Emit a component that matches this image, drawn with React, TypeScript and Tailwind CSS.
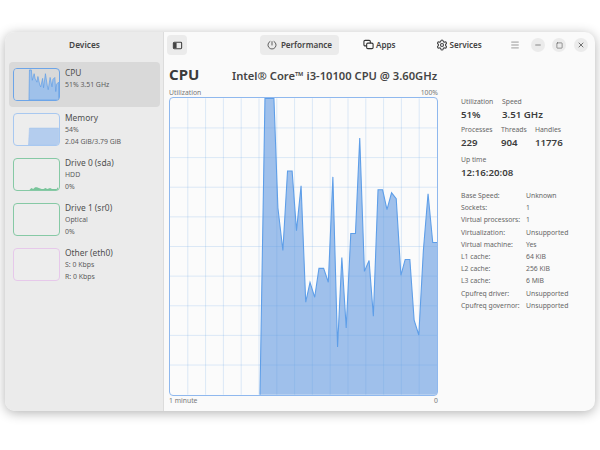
import { Menu, Minus, Settings, Square, X } from "lucide-react"

const chartPoints: [number, number][] = [
  [90.5, 298], [95.5, 0], [104.5, 0], [108.5, 110], [113.5, 153], [118.2, 73], [122.8, 73],
  [127.2, 133], [131.8, 88], [136.5, 205], [140.8, 185], [145.5, 200], [149.8, 171], [154.5, 171],
  [159.2, 185], [163.8, 79], [168.5, 250], [172.8, 160], [177.2, 231], [181.8, 136], [186.5, 136],
  [190.8, 40], [195.5, 174], [200.2, 163], [204.5, 219], [209.2, 92], [213.8, 92], [218.2, 112],
  [222.8, 95], [227.5, 101], [232.2, 178], [236.5, 162], [241.2, 162], [245.5, 223], [250.2, 238],
  [254.8, 153], [259.5, 96], [264.2, 145], [268.5, 145],
]

const linePath = chartPoints.map(([x, y]) => `${x},${y}`).join(" ")
const fillPath = `${linePath} 268.5,298`

const details = [
  ["Base Speed:", "Unknown"],
  ["Sockets:", "1"],
  ["Virtual processors:", "1"],
  ["Virtualization:", "Unsupported"],
  ["Virtual machine:", "Yes"],
  ["L1 cache:", "64 KiB"],
  ["L2 cache:", "256 KiB"],
  ["L3 cache:", "6 MiB"],
  ["Cpufreq driver:", "Unsupported"],
  ["Cpufreq governor:", "Unsupported"],
]

function CpuThumb() {
  return (
    <svg viewBox="0 0 47 33" className="h-full w-full">
      <rect x="0" y="0" width="15.5" height="33" fill="#dcdcdc" />
      <polygon
        points="15.5,33 16,1 18,1 19,12 21,5 22,10 24,14 25,8 27,17 28,19 30,10 31,20 33,5 35,18 36,22 38,9 40,19 41,11 43,9 44,24 45,16 47,14 47,33"
        fill="#9fc1ea"
        stroke="#5b9ce6"
        strokeWidth="0.7"
      />
    </svg>
  )
}

function MemoryThumb() {
  return (
    <svg viewBox="0 0 47 33" className="h-full w-full">
      <polygon points="15,33 16,15 47,15 47,33" fill="#b4cdee" stroke="#a4c5ef" strokeWidth="0.6" />
    </svg>
  )
}

function DriveThumb() {
  return (
    <svg viewBox="0 0 47 33" className="h-full w-full">
      <polygon
        points="16,33 18,31 20,32 22,30 24,30 26,31 29,32 31,32 33,31 35,32 38,31 40,32 43,32 45,32 46,30 47,33"
        fill="#78c49a"
      />
    </svg>
  )
}

const devices = [
  { name: "CPU", lines: ["51% 3.51 GHz"], border: "border-[#6da5e8]", bg: "bg-transparent", thumb: <CpuThumb />, active: true },
  { name: "Memory", lines: ["54%", "2.04 GiB/3.79 GiB"], border: "border-[#a8c8f0]", bg: "bg-[#ededed]", thumb: <MemoryThumb />, active: false },
  { name: "Drive 0 (sda)", lines: ["HDD", "0%"], border: "border-[#86c9a5]", bg: "bg-[#ededed]", thumb: <DriveThumb />, active: false },
  { name: "Drive 1 (sr0)", lines: ["Optical", "0%"], border: "border-[#86c9a5]", bg: "bg-[#ededed]", thumb: null, active: false },
  { name: "Other (eth0)", lines: ["S: 0 Kbps", "R: 0 Kbps"], border: "border-[#e6c8ea]", bg: "bg-[#ededed]", thumb: null, active: false },
]

function DeviceRow({ device }: { device: (typeof devices)[number] }) {
  return (
    <div
      className={`flex h-[45px] items-center gap-[5px] rounded-[4px] pl-[4px] ${
        device.active ? "bg-[#d9d9d9]" : ""
      }`}
    >
      <div
        className={`h-[33px] w-[47px] shrink-0 overflow-hidden rounded-[4px] border ${device.border} ${device.bg}`}
      >
        {device.thumb}
      </div>
      <div className="self-start pt-[5px] text-[#4f4f4f]">
        <p className="text-[8.4px] leading-[12px]">{device.name}</p>
        {device.lines.map((line) => (
          <p key={line} className="text-[6.9px] leading-[11.5px] text-[#5c5c5c]">
            {line}
          </p>
        ))}
      </div>
    </div>
  )
}

function Stat({ label, value, className }: { label: string; value: string; className: string }) {
  return (
    <div className={className}>
      <p className="text-[6.8px] leading-[11px] text-[#666666]">{label}</p>
      <p className="mt-[1px] text-[9.7px] font-semibold leading-[14px] text-[#3d3d3d]">{value}</p>
    </div>
  )
}

function UtilizationChart() {
  const verticals = Array.from({ length: 14 }, (_, i) => (i + 1) * 17.9)
  const horizontals = Array.from({ length: 9 }, (_, i) => (i + 1) * 29.8)

  return (
    <div className="h-[299px] w-[269px] overflow-hidden rounded-[4px] border border-[#8fb8ee] bg-[#fbfbfb]">
      <svg viewBox="0 0 268.5 298" className="block h-full w-full">
        <polygon points={fillPath} fill="#77a7e4" fillOpacity="0.7" />
        {verticals.map((x) => (
          <line key={x} x1={x} x2={x} y1="0" y2="298" stroke="#5e9ee8" strokeOpacity="0.2" strokeWidth="1" />
        ))}
        {horizontals.map((y) => (
          <line key={y} x1="0" x2="268.5" y1={y} y2={y} stroke="#5e9ee8" strokeOpacity="0.2" strokeWidth="1" />
        ))}
        <polyline points={linePath} fill="none" stroke="#5e9ee8" strokeWidth="1.1" />
      </svg>
    </div>
  )
}

export default function App() {
  return (
    <div className="h-[450px] w-[600px] overflow-hidden bg-white pl-[5px] pt-[32px] font-['Noto_Sans',sans-serif]">
      <div className="flex h-[379px] w-[590px] overflow-hidden rounded-[10px] bg-[#fafafa] shadow-[0_2px_12px_rgba(0,0,0,0.3)]">
        <aside className="w-[159px] shrink-0 border-r border-[#dcdcdc] bg-[#ebebeb] pl-[4px] pr-[3px]">
          <h2 className="pt-[6px] text-center text-[8.3px] font-semibold leading-[14px] text-[#444444]">
            Devices
          </h2>
          <div className="mt-[10px]">
            {devices.map((device) => (
              <DeviceRow key={device.name} device={device} />
            ))}
          </div>
        </aside>

        <main className="flex min-w-0 flex-1 flex-col">
          <header className="flex h-[26px] items-center text-[8.1px] font-semibold text-[#444444]">
            <button className="ml-[3px] flex h-[20px] w-[20px] items-center justify-center rounded-[4px] bg-[#ebebeb]">
              <svg viewBox="0 0 12 12" className="h-[11px] w-[11px]" fill="none" stroke="#444444" strokeWidth="1.2">
                <rect x="1.5" y="2.5" width="9" height="7" rx="1" />
                <rect x="2" y="3" width="3" height="6" fill="#444444" stroke="none" />
              </svg>
            </button>
            <button className="ml-[73px] flex h-[20px] w-[79px] items-center justify-center gap-[4px] rounded-[4px] bg-[#ebebeb]">
              <svg viewBox="0 0 12 12" className="h-[10px] w-[10px]" fill="none" stroke="#444444" strokeWidth="1">
                <path d="M4 1.6A4.8 4.8 0 1 0 8 1.6" />
                <path d="M6 1.5V6.5" />
              </svg>
              Performance
            </button>
            <div className="ml-[24px] flex items-center gap-[2px]">
              <svg viewBox="0 0 12 12" className="h-[11px] w-[11px]" fill="none" stroke="#333333" strokeWidth="1.2">
                <rect x="1" y="1.5" width="7" height="6" rx="1.3" />
                <rect x="4" y="4.5" width="7" height="6" rx="1.3" fill="#fafafa" />
              </svg>
              Apps
            </div>
            <div className="ml-[40px] flex items-center gap-[2px]">
              <Settings size={12} strokeWidth={2.2} color="#444444" />
              Services
            </div>
            <Menu size={10} strokeWidth={1.4} color="#555555" className="ml-[28px]" />
            <div className="ml-[11px] flex items-center gap-[7.5px]">
              <span className="flex h-[14px] w-[14px] items-center justify-center rounded-full bg-[#ebebeb]">
                <Minus size={8} strokeWidth={1.8} color="#444444" />
              </span>
              <span className="flex h-[14px] w-[14px] items-center justify-center rounded-full bg-[#ebebeb]">
                <Square size={7} strokeWidth={1.8} color="#444444" />
              </span>
              <span className="flex h-[14px] w-[14px] items-center justify-center rounded-full bg-[#ebebeb]">
                <X size={8} strokeWidth={2} color="#333333" />
              </span>
            </div>
          </header>

          <div className="flex items-baseline pl-[5px] pt-[4px]">
            <h1 className="w-[63px] text-[15px] font-bold leading-[24px] text-[#3b3b3b]">CPU</h1>
            <p className="w-[207px] whitespace-nowrap text-[11.2px] font-semibold leading-[24px] text-[#444444]">
              Intel® Core™ i3-10100 CPU @ 3.60GHz
            </p>
          </div>

          <div className="flex">
            <div className="ml-[5px] w-[269px]">
              <div className="mt-[1px] flex h-[8px] items-center justify-between text-[6.8px] text-[#777777]">
                <span>Utilization</span>
                <span>100%</span>
              </div>
              <UtilizationChart />
              <div className="flex h-[10px] items-center justify-between text-[6.8px] text-[#777777]">
                <span>1 minute</span>
                <span>0</span>
              </div>
            </div>

            <div className="ml-[23px] pt-[8px]">
              <div className="flex">
                <Stat label="Utilization" value="51%" className="w-[41px]" />
                <Stat label="Speed" value="3.51 GHz" className="" />
              </div>
              <div className="mt-[2px] flex">
                <Stat label="Processes" value="229" className="w-[40px]" />
                <Stat label="Threads" value="904" className="w-[34px]" />
                <Stat label="Handles" value="11776" className="" />
              </div>
              <Stat label="Up time" value="12:16:20:08" className="mt-[4px]" />
              <div className="mt-[10px] grid grid-cols-[65px_auto] text-[6.8px] leading-[12.2px] text-[#666666]">
                {details.map(([label, value]) => (
                  <div key={label} className="contents">
                    <span className="whitespace-nowrap">{label}</span>
                    <span>{value}</span>
                  </div>
                ))}
              </div>
            </div>
          </div>
        </main>
      </div>
    </div>
  )
}
